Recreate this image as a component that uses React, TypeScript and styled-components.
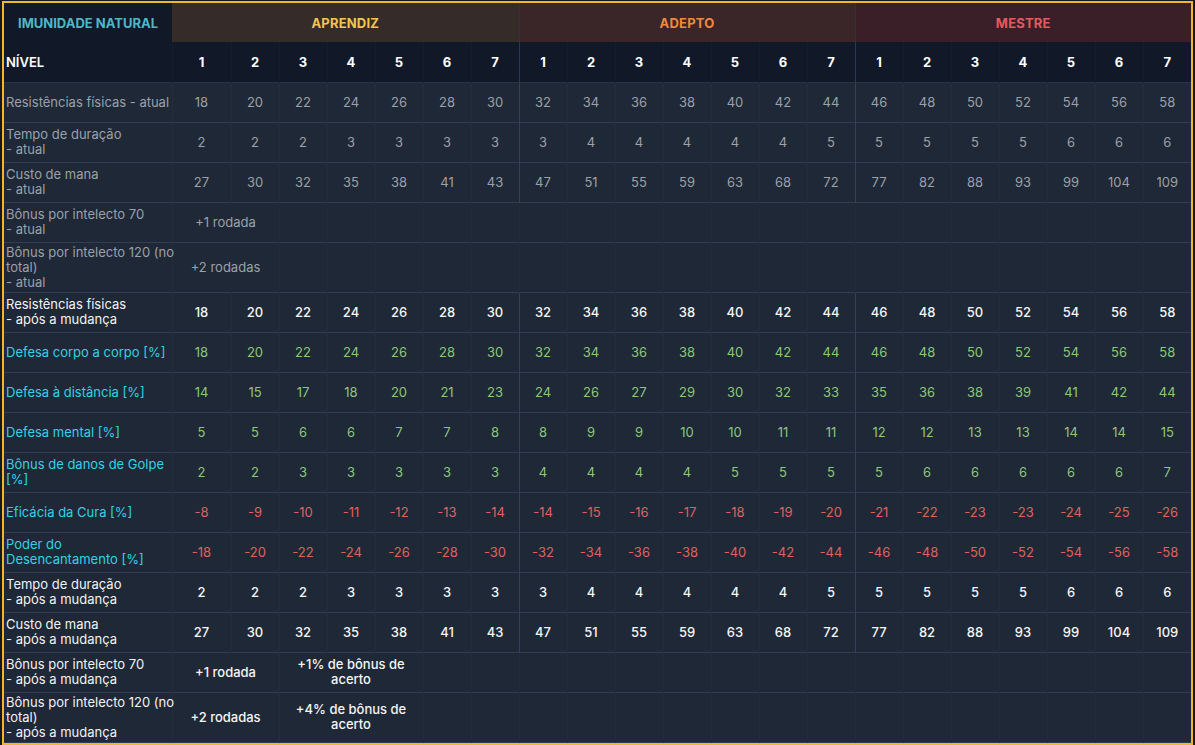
import React from "react";
import styled, { createGlobalStyle } from "styled-components";

const GlobalStyle = createGlobalStyle`
  html, body {
    margin: 0;
    padding: 0;
    background: #111827;
  }
  body {
    font-family: "Inter", "Noto Sans", sans-serif;
    font-size: 13px;
  }
`;

type Tone = "muted" | "bright" | "stat";
type ValueTone = "muted" | "bright" | "good" | "bad";

interface StatRow {
  label: string[];
  tone: Tone;
  valueTone?: ValueTone;
  values?: number[];
  spans?: { text: string[]; cols: number }[];
}

const groups = [
  { name: "APRENDIZ", color: "#f6c453", bg: "#352b28" },
  { name: "ADEPTO", color: "#ee8a3c", bg: "#3a2528" },
  { name: "MESTRE", color: "#e45a5e", bg: "#3a1f29" },
];

const rows: StatRow[] = [
  {
    label: ["Resistências físicas - atual"],
    tone: "muted",
    valueTone: "muted",
    values: [18, 20, 22, 24, 26, 28, 30, 32, 34, 36, 38, 40, 42, 44, 46, 48, 50, 52, 54, 56, 58],
  },
  {
    label: ["Tempo de duração", "- atual"],
    tone: "muted",
    valueTone: "muted",
    values: [2, 2, 2, 3, 3, 3, 3, 3, 4, 4, 4, 4, 4, 5, 5, 5, 5, 5, 6, 6, 6],
  },
  {
    label: ["Custo de mana", "- atual"],
    tone: "muted",
    valueTone: "muted",
    values: [27, 30, 32, 35, 38, 41, 43, 47, 51, 55, 59, 63, 68, 72, 77, 82, 88, 93, 99, 104, 109],
  },
  {
    label: ["Bônus por intelecto 70", "- atual"],
    tone: "muted",
    valueTone: "muted",
    spans: [{ text: ["+1 rodada"], cols: 2 }],
  },
  {
    label: ["Bônus por intelecto 120 (no", "total)", "- atual"],
    tone: "muted",
    valueTone: "muted",
    spans: [{ text: ["+2 rodadas"], cols: 2 }],
  },
  {
    label: ["Resistências físicas", "- após a mudança"],
    tone: "bright",
    valueTone: "bright",
    values: [18, 20, 22, 24, 26, 28, 30, 32, 34, 36, 38, 40, 42, 44, 46, 48, 50, 52, 54, 56, 58],
  },
  {
    label: ["Defesa corpo a corpo [%]"],
    tone: "stat",
    valueTone: "good",
    values: [18, 20, 22, 24, 26, 28, 30, 32, 34, 36, 38, 40, 42, 44, 46, 48, 50, 52, 54, 56, 58],
  },
  {
    label: ["Defesa à distância [%]"],
    tone: "stat",
    valueTone: "good",
    values: [14, 15, 17, 18, 20, 21, 23, 24, 26, 27, 29, 30, 32, 33, 35, 36, 38, 39, 41, 42, 44],
  },
  {
    label: ["Defesa mental [%]"],
    tone: "stat",
    valueTone: "good",
    values: [5, 5, 6, 6, 7, 7, 8, 8, 9, 9, 10, 10, 11, 11, 12, 12, 13, 13, 14, 14, 15],
  },
  {
    label: ["Bônus de danos de Golpe", "[%]"],
    tone: "stat",
    valueTone: "good",
    values: [2, 2, 3, 3, 3, 3, 3, 4, 4, 4, 4, 5, 5, 5, 5, 6, 6, 6, 6, 6, 7],
  },
  {
    label: ["Eficácia da Cura [%]"],
    tone: "stat",
    valueTone: "bad",
    values: [-8, -9, -10, -11, -12, -13, -14, -14, -15, -16, -17, -18, -19, -20, -21, -22, -23, -23, -24, -25, -26],
  },
  {
    label: ["Poder do", "Desencantamento [%]"],
    tone: "stat",
    valueTone: "bad",
    values: [-18, -20, -22, -24, -26, -28, -30, -32, -34, -36, -38, -40, -42, -44, -46, -48, -50, -52, -54, -56, -58],
  },
  {
    label: ["Tempo de duração", "- após a mudança"],
    tone: "bright",
    valueTone: "bright",
    values: [2, 2, 2, 3, 3, 3, 3, 3, 4, 4, 4, 4, 4, 5, 5, 5, 5, 5, 6, 6, 6],
  },
  {
    label: ["Custo de mana", "- após a mudança"],
    tone: "bright",
    valueTone: "bright",
    values: [27, 30, 32, 35, 38, 41, 43, 47, 51, 55, 59, 63, 68, 72, 77, 82, 88, 93, 99, 104, 109],
  },
  {
    label: ["Bônus por intelecto 70", "- após a mudança"],
    tone: "bright",
    valueTone: "bright",
    spans: [
      { text: ["+1 rodada"], cols: 2 },
      { text: ["+1% de bônus de", "acerto"], cols: 3 },
    ],
  },
  {
    label: ["Bônus por intelecto 120 (no", "total)", "- após a mudança"],
    tone: "bright",
    valueTone: "bright",
    spans: [
      { text: ["+2 rodadas"], cols: 2 },
      { text: ["+4% de bônus de", "acerto"], cols: 3 },
    ],
  },
];

const labelColors: Record<Tone, string> = {
  muted: "#9aa1ab",
  bright: "#f1f3f5",
  stat: "#2fd3e3",
};

const valueColors: Record<ValueTone, string> = {
  muted: "#9aa1ab",
  bright: "#f4f5f7",
  good: "#8cc77c",
  bad: "#e0605f",
};

const Frame = styled.div`
  margin: 1px 2px 0 2px;
  border: 2px solid #f2b62c;
  background: #1f2836;
`;

const Table = styled.table`
  width: 1187px;
  border-collapse: collapse;
  table-layout: fixed;
`;

const GroupRow = styled.tr`
  height: 39px;
`;

const TitleCell = styled.th`
  background: #111827;
  color: #4db7c9;
  font-weight: 700;
  font-size: 13px;
  text-align: center;
  padding: 0;
`;

const GroupCell = styled.th<{ $bg: string; $color: string; $edge: boolean }>`
  background: ${(p) => p.$bg};
  color: ${(p) => p.$color};
  font-weight: 700;
  font-size: 13px;
  letter-spacing: 0.2px;
  text-align: center;
  padding: 0;
  border-left: ${(p) => (p.$edge ? "1px solid #3b2f33" : "none")};
`;

const LevelRow = styled.tr`
  height: 40px;
  background: #111827;
  border-bottom: 1px solid #273244;
`;

const LevelLabel = styled.th`
  color: #ffffff;
  font-weight: 600;
  text-align: left;
  padding: 0 0 0 2px;
`;

const LevelCell = styled.th<{ $edge: boolean }>`
  color: #ffffff;
  font-weight: 700;
  text-align: center;
  padding: 0;
  border-left: 1px solid ${(p) => (p.$edge ? "#2d3a4d" : "#151e2d")};
`;

const DataRow = styled.tr<{ $tall: boolean }>`
  height: ${(p) => (p.$tall ? 50 : 40)}px;
  background: #1f2836;
  border-bottom: 1px solid #303e52;
`;

const LabelCell = styled.td<{ $tone: Tone }>`
  color: ${(p) => labelColors[p.$tone]};
  font-weight: 400;
  line-height: 15px;
  text-align: left;
  padding: 0 0 0 2px;
  vertical-align: middle;
`;

const ValueCell = styled.td<{ $tone: ValueTone; $edge: boolean; $empty?: boolean }>`
  color: ${(p) => valueColors[p.$tone]};
  font-weight: ${(p) => (p.$tone === "bright" ? 500 : 400)};
  line-height: 15px;
  text-align: center;
  padding: 0;
  border-left: 1px solid
    ${(p) => (p.$empty ? "#212b39" : p.$edge ? "#33425a" : "#232d3c")};
`;

const Line = styled.div`
  white-space: nowrap;
`;

const isEdge = (i: number) => i > 0 && i % 7 === 0;

function renderCells(row: StatRow) {
  const tone = row.valueTone ?? "muted";
  if (row.values) {
    return row.values.map((v, i) => (
      <ValueCell key={i} $tone={tone} $edge={isEdge(i)}>
        {v}
      </ValueCell>
    ));
  }
  const cells: React.ReactNode[] = [];
  let used = 0;
  row.spans?.forEach((s, i) => {
    cells.push(
      <ValueCell key={`s${i}`} colSpan={s.cols} $tone={tone} $edge={false}>
        {s.text.map((t, j) => (
          <Line key={j}>{t}</Line>
        ))}
      </ValueCell>
    );
    used += s.cols;
  });
  for (let i = used; i < 21; i++) {
    cells.push(<ValueCell key={`e${i}`} $tone={tone} $edge={false} $empty />);
  }
  return cells;
}

export default function App() {
  const levels = [1, 2, 3, 4, 5, 6, 7];
  return (
    <>
      <GlobalStyle />
      <Frame>
        <Table>
          <colgroup>
            <col style={{ width: 168 }} />
            <col style={{ width: 59 }} />
            {Array.from({ length: 20 }).map((_, i) => (
              <col key={i} style={{ width: 48 }} />
            ))}
          </colgroup>
          <thead>
            <GroupRow>
              <TitleCell>IMUNIDADE NATURAL</TitleCell>
              {groups.map((g, i) => (
                <GroupCell key={g.name} colSpan={7} $bg={g.bg} $color={g.color} $edge={i > 0}>
                  {g.name}
                </GroupCell>
              ))}
            </GroupRow>
            <LevelRow>
              <LevelLabel>NÍVEL</LevelLabel>
              {groups.flatMap((g, gi) =>
                levels.map((l, li) => (
                  <LevelCell key={`${g.name}${l}`} $edge={gi > 0 && li === 0}>
                    {l}
                  </LevelCell>
                ))
              )}
            </LevelRow>
          </thead>
          <tbody>
            {rows.map((row, i) => (
              <DataRow key={i} $tall={row.label.length > 2}>
                <LabelCell $tone={row.tone}>
                  {row.label.map((t, j) => (
                    <Line key={j}>{t}</Line>
                  ))}
                </LabelCell>
                {renderCells(row)}
              </DataRow>
            ))}
          </tbody>
        </Table>
      </Frame>
    </>
  );
}
